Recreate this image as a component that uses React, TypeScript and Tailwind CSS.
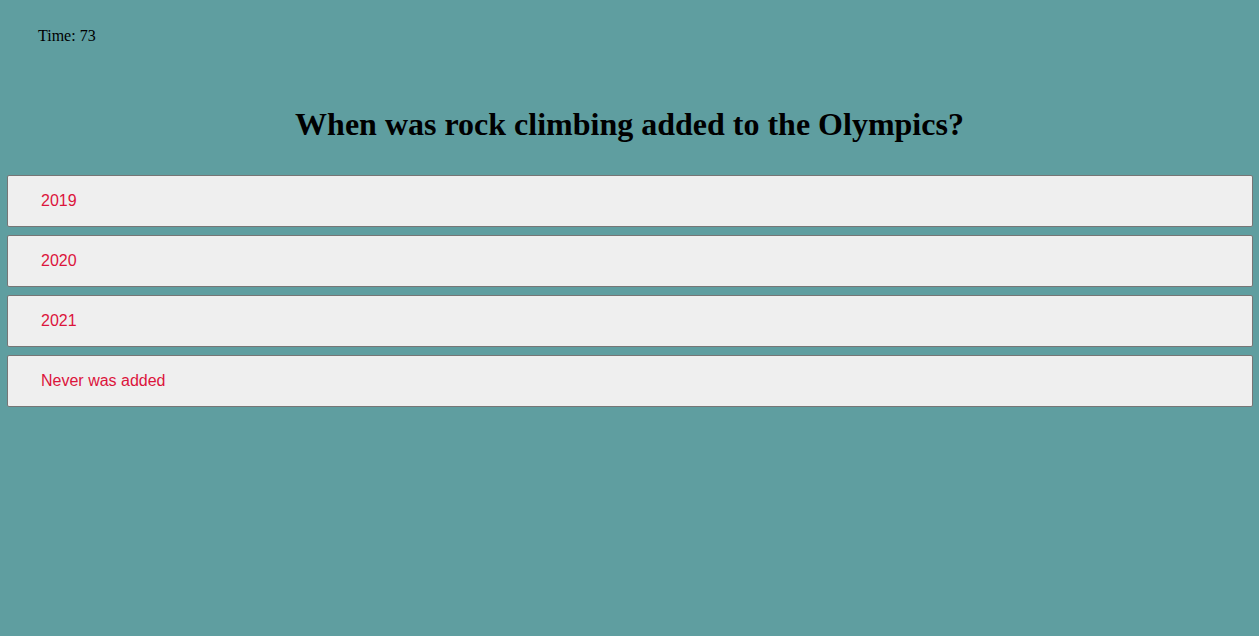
import React from "react";

export default function App() {
  const answers = ["2019", "2020", "2021", "Never was added"];
  return (
    <div className="w-[1259px] h-[636px] bg-[#5f9ea0] overflow-hidden font-['Liberation_Serif',serif]">
      <div className="pt-[27px] pl-[38px] h-[44px] text-[16px] leading-[18px] text-black">
        Time: 73
      </div>
      <h1 className="mt-[62px] text-center text-[32px] leading-[37px] font-bold text-black">
        When was rock climbing added to the Olympics?
      </h1>
      <div className="mt-[32px] pl-[7px] pr-[6px] flex flex-col gap-[8px]">
        {answers.map((a) => (
          <button
            key={a}
            className="h-[52px] w-full text-left pl-[33px] bg-[#efefef] border border-[#767676] rounded-[2px] text-[16px] text-[#dc143c] font-['Liberation_Sans',Arial,sans-serif]"
          >
            {a}
          </button>
        ))}
      </div>
    </div>
  );
}
